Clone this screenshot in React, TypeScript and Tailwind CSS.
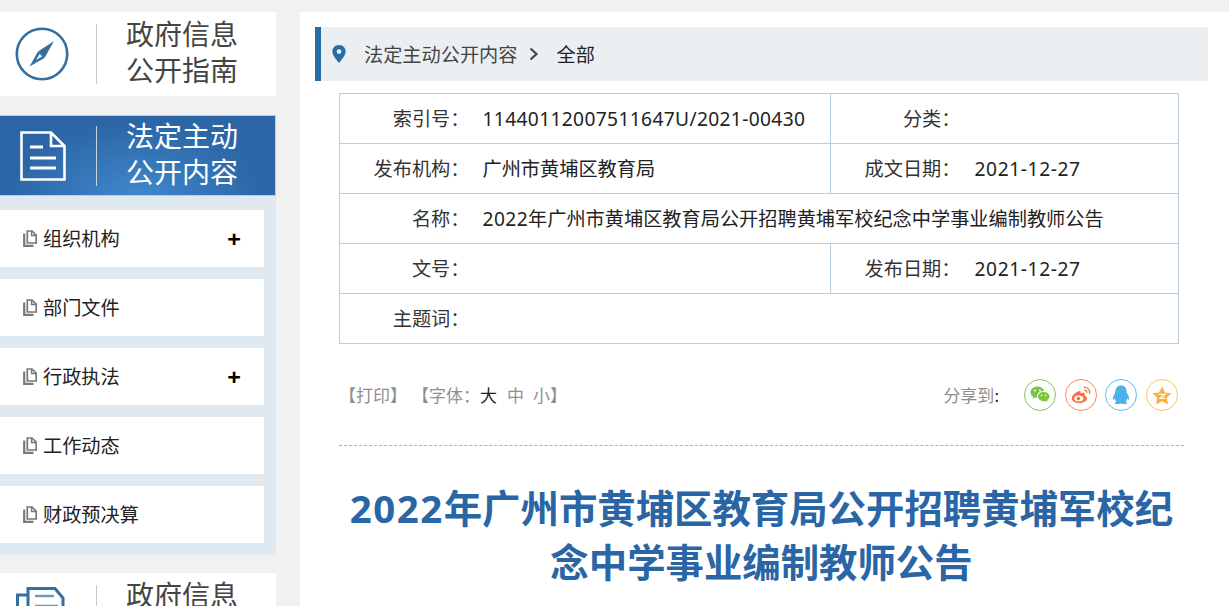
const FONT = "font-['Noto_Sans','Noto_Sans_CJK_SC',sans-serif]";

const MENU = [
  { label: "组织机构", more: true },
  { label: "部门文件", more: false },
  { label: "行政执法", more: true },
  { label: "工作动态", more: false },
  { label: "财政预决算", more: false },
];

function CompassIcon() {
  return (
    <svg width="54" height="54" viewBox="0 0 54 54" fill="none">
      <circle cx="27" cy="27" r="25.2" stroke="#356f9f" strokeWidth="2.6" />
      <path d="M39 14 L29.5 31 L23 24.5 Z" fill="#356f9f" />
      <path d="M14.5 39.5 L23 24.5 L29.5 31 Z" fill="#356f9f" />
      <path d="M21 33 L24.6 27 L27 29.5 Z" fill="#fff" />
    </svg>
  );
}

function DocIcon() {
  return (
    <svg width="46" height="50" viewBox="0 0 46 50" fill="none" stroke="#fff" strokeWidth="2.6">
      <path d="M1.5 1.5 H31 L44.5 15 V48.5 H1.5 Z" />
      <path d="M31 1.5 V15 H44.5" />
      <path d="M10 16 H23 M10 27 H36 M10 37 H36" strokeWidth="3" />
    </svg>
  );
}

function PrintDocIcon() {
  return (
    <svg width="50" height="56" viewBox="0 0 50 56" fill="none" stroke="#356f9f" strokeWidth="3">
      <path d="M13 8 H2.5 V56" />
      <path d="M13 20 V1.5 H40 L48 11 V56" />
      <path d="M20 9 H39 M20 19 H43" strokeWidth="2.4" stroke="#6f9bc0" />
    </svg>
  );
}

function CopyIcon() {
  return (
    <svg width="14" height="17" viewBox="0 0 14 17" fill="none" className="shrink-0">
      <path d="M1.2 3.5 V15.8 H10.5" stroke="#7a7a7a" strokeWidth="2.2" />
      <path d="M4.3 1 H9 L13.2 5.2 V13 H4.3 Z" stroke="#777" strokeWidth="1.7" fill="#fff" />
      <path d="M8.6 1 V5.6 H13.2" stroke="#777" strokeWidth="1.5" />
    </svg>
  );
}

function PinIcon() {
  return (
    <svg width="14" height="18" viewBox="0 0 14 18">
      <path
        fillRule="evenodd"
        d="M7 0 C3 0 0.4 2.9 0.4 6.4 C0.4 10.6 5 15 7 18 C9 15 13.6 10.6 13.6 6.4 C13.6 2.9 11 0 7 0 Z M7 4.2 A2.4 2.4 0 1 1 7 9 A2.4 2.4 0 1 1 7 4.2 Z"
        fill="#2a6ca5"
      />
    </svg>
  );
}

function ChevronIcon() {
  return (
    <svg width="10" height="14" viewBox="0 0 10 14" fill="none">
      <path d="M1.5 1.5 L7.5 7 L1.5 12.5" stroke="#444" strokeWidth="2.2" />
    </svg>
  );
}

function WechatIcon() {
  return (
    <svg width="20" height="18" viewBox="0 0 20 18">
      <path d="M7.5 0.5 C3.5 0.5 0.5 3 0.5 6.2 C0.5 8 1.5 9.5 3 10.6 L2.4 12.6 L4.7 11.4 C5.6 11.7 6.3 11.8 7.2 11.8 C7 11.2 7 10.7 7 10.2 C7 7.2 9.8 4.9 13.6 4.9 L14.4 5 C13.6 2.4 10.8 0.5 7.5 0.5 Z" fill="#7dc242" />
      <path d="M13.5 6 C10.4 6 8 8 8 10.6 C8 13.2 10.4 15.2 13.5 15.2 C14.2 15.2 14.9 15.1 15.5 14.9 L17.5 16 L17 14.2 C18.5 13.2 19.5 12 19.5 10.6 C19.5 8 16.7 6 13.5 6 Z" fill="#7dc242" />
      <circle cx="5" cy="4.4" r="1" fill="#fff" />
      <circle cx="10" cy="4.4" r="1" fill="#fff" />
      <circle cx="11.6" cy="9.4" r="0.8" fill="#fff" />
      <circle cx="15.6" cy="9.4" r="0.8" fill="#fff" />
    </svg>
  );
}

function WeiboIcon() {
  return (
    <svg width="20" height="18" viewBox="0 0 20 18" fill="none">
      <path d="M8 5.2 C4.4 6.4 0.6 9.6 0.8 12.4 C1 15.4 4.8 17 8.6 17 C12.6 17 16 14.8 16 12.2 C16 10.8 14.6 10.2 13.6 9.8 C14.2 8.4 14 7.2 12.8 6.8 C11.6 6.4 10 7 9.4 7.2 C9.8 5.6 9.4 4.6 8 5.2 Z" fill="#fb6d3d" />
      <ellipse cx="7.8" cy="12.4" rx="4.6" ry="3" fill="#fff" />
      <circle cx="7.4" cy="12.6" r="1.8" fill="#fb6d3d" />
      <path d="M12.6 1.2 C15.8 0.6 19.4 3.6 18.6 7.6" stroke="#fb6d3d" strokeWidth="1.3" />
      <path d="M13 4.2 C14.6 3.8 16.2 5.2 15.8 7" stroke="#fb6d3d" strokeWidth="1.2" />
    </svg>
  );
}

function QqIcon() {
  return (
    <svg width="18" height="20" viewBox="0 0 18 20">
      <path d="M9 0.5 C5.2 0.5 3.4 3.2 3.4 6.4 C3.4 7.4 3 8.2 2.4 9.2 C1.4 10.8 0.6 13 1 14.8 C1.6 15 2.2 14.2 2.8 13.4 C3 14.6 3.6 15.6 4.4 16.4 C3.4 16.8 2.8 17.4 3 18.2 C3.4 19.2 6.6 19.4 9 18.4 C11.4 19.4 14.6 19.2 15 18.2 C15.2 17.4 14.6 16.8 13.6 16.4 C14.4 15.6 15 14.6 15.2 13.4 C15.8 14.2 16.4 15 17 14.8 C17.4 13 16.6 10.8 15.6 9.2 C15 8.2 14.6 7.4 14.6 6.4 C14.6 3.2 12.8 0.5 9 0.5 Z" fill="#4eb2ea" />
    </svg>
  );
}

function QzoneIcon() {
  return (
    <svg width="20" height="19" viewBox="0 0 20 19">
      <path d="M10 0.5 L13 6.4 L19.6 7.3 L14.8 11.8 L16 18.4 L10 15.3 L4 18.4 L5.2 11.8 L0.4 7.3 L7 6.4 Z" fill="#fdb03f" />
      <path d="M6.8 8.4 H13 L8.2 12.2 H13.4" stroke="#fff" strokeWidth="1.1" fill="none" />
    </svg>
  );
}

function SideHead({
  lines,
  icon,
  iconClass,
  active,
}: {
  lines: string[];
  icon: React.ReactNode;
  iconClass: string;
  active?: boolean;
}) {
  return (
    <div
      className={`flex items-center w-[276px] ${
        active
          ? "h-[81px] bg-[radial-gradient(ellipse_at_50%_100%,#3f88cb_0%,#2c66a6_65%)] border border-[#b9cfe0] border-l-0 text-white"
          : "h-[84px] bg-white text-[#444]"
      }`}
    >
      <div className={`w-[96px] shrink-0 ${iconClass}`}>{icon}</div>
      <div className={`w-px h-[60px] ${active ? "bg-[#c9d3dc]" : "bg-[#c8c8c8]"}`} />
      <div className="ml-[30px] mb-[4px] -translate-x-px text-[28px] leading-[36px]">
        {lines.map((l) => (
          <div key={l}>{l}</div>
        ))}
      </div>
    </div>
  );
}

function Sidebar() {
  return (
    <aside className="w-[276px] shrink-0 pt-3">
      <SideHead lines={["政府信息", "公开指南"]} icon={<CompassIcon />} iconClass="pl-[15px]" />
      <div className="mt-[19px]">
        <SideHead lines={["法定主动", "公开内容"]} icon={<DocIcon />} iconClass="pl-[20px]" active />
      </div>
      <div className="bg-[#dfe9ef] pt-[14px] pb-3 flex flex-col gap-3">
        {MENU.map((m) => (
          <div key={m.label} className="w-[264px] h-[57px] bg-white flex items-center pl-[23px] text-[19.2px] text-[#222]">
            <CopyIcon />
            <span className="ml-[6px] pt-[2px]">{m.label}</span>
            {m.more && <span className="ml-auto mr-[23px] text-[24px] font-bold leading-none text-black">+</span>}
          </div>
        ))}
      </div>
      <div className="mt-[18px]">
        <SideHead lines={["政府信息", "\u00a0"]} icon={<PrintDocIcon />} iconClass="pl-[15px]" />
      </div>
    </aside>
  );
}

function Label({ children }: { children: React.ReactNode }) {
  return <td className="text-right text-[#333] whitespace-nowrap pt-[2px] pr-px">{children}</td>;
}

function InfoTable() {
  return (
    <table className="ml-[39px] w-[840px] table-fixed border-collapse border border-[#b7cfe0] text-[19.2px] text-[#222]">
      <colgroup>
        <col className="w-[131px]" />
        <col className="w-[360px]" />
        <col className="w-[131px]" />
        <col />
      </colgroup>
      <tbody>
        <tr className="h-[50px] border-b border-[#b7cfe0]">
          <Label>索引号：</Label>
          <td className="pl-[12px] pt-[2px] whitespace-nowrap border-r border-[#b7cfe0] tracking-[0.35px]">11440112007511647U/2021-00430</td>
          <Label>分类：</Label>
          <td />
        </tr>
        <tr className="h-[50px] border-b border-[#b7cfe0]">
          <Label>发布机构：</Label>
          <td className="pl-[12px] pt-[2px] border-r border-[#b7cfe0]">广州市黄埔区教育局</td>
          <Label>成文日期：</Label>
          <td className="pl-[13px] pt-[2px] tracking-[0.6px]">2021-12-27</td>
        </tr>
        <tr className="h-[50px] border-b border-[#b7cfe0]">
          <Label>名称：</Label>
          <td colSpan={3} className="pl-[12px] pt-[2px] whitespace-nowrap">
            <span className="tracking-[0.4px]">2022</span>年广州市黄埔区教育局公开招聘黄埔军校纪念中学事业编制教师公告
          </td>
        </tr>
        <tr className="h-[50px] border-b border-[#b7cfe0]">
          <Label>文号：</Label>
          <td className="border-r border-[#b7cfe0]" />
          <Label>发布日期：</Label>
          <td className="pl-[13px] pt-[2px] tracking-[0.6px]">2021-12-27</td>
        </tr>
        <tr className="h-[50px]">
          <Label>主题词：</Label>
          <td colSpan={3} />
        </tr>
      </tbody>
    </table>
  );
}

function ShareCircle({ color, children }: { color: string; children: React.ReactNode }) {
  return (
    <span className={`w-[32px] h-[32px] rounded-full border flex items-center justify-center ${color}`}>{children}</span>
  );
}

export default function App() {
  return (
    <div className={`${FONT} w-[1229px] h-[606px] overflow-hidden bg-[#f1f1f1] flex`}>
      <Sidebar />
      <main className="ml-[24px] flex-1 mt-3 bg-white pt-[15px] pl-[15px]">
        <div className="w-[893px] h-[54px] bg-[#eceff2] border-l-[6px] border-[#2a6ca5] flex items-center text-[19.2px] pl-[11px]">
          <PinIcon />
          <span className="ml-[18px] pt-[2px] text-[#444]">法定主动公开内容</span>
          <span className="ml-[11px]"><ChevronIcon /></span>
          <span className="ml-[18px] pt-[2px] text-[#222]">全部</span>
        </div>
        <div className="mt-3 -ml-[15px]">
          <InfoTable />
        </div>
        <div className="mt-[35px] w-[839px] ml-[24px] flex items-center text-[17px] h-[32px] text-[#8f8f8f]">
          <span className="pt-[2px]">【打印】</span>
          <span className="ml-[5px] pt-[2px]">【字体：</span>
          <span className="pt-[2px] text-[#222]">大</span>
          <span className="ml-[10px] pt-[2px]">中</span>
          <span className="ml-[9px] pt-[2px]">小】</span>
          <span className="ml-auto pt-[2px]">分享到<span className="text-[#222]">:</span></span>
          <div className="ml-[25px] flex gap-[8.7px]">
            <ShareCircle color="border-[#86c760]"><WechatIcon /></ShareCircle>
            <ShareCircle color="border-[#fb8a5f]"><WeiboIcon /></ShareCircle>
            <ShareCircle color="border-[#66bcec]"><QqIcon /></ShareCircle>
            <ShareCircle color="border-[#fdc361]"><QzoneIcon /></ShareCircle>
          </div>
        </div>
        <div className="mt-[34px] ml-[24px] w-[845px] border-t border-dashed border-[#b0b0b0]" />
        <h1 className="mt-[35px] ml-[24px] w-[845px] text-center text-[38.4px] leading-[54px] font-bold text-[#2a65a5]">
          <span className="tracking-[1.5px]">2022</span>年广州市黄埔区教育局公开招聘黄埔军校纪念中学事业编制教师公告
        </h1>
      </main>
    </div>
  );
}
